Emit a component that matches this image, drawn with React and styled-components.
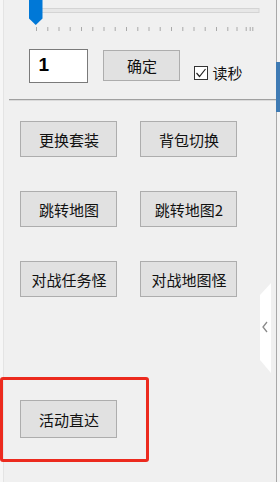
import styled, { createGlobalStyle } from 'styled-components'

// Estilos globais da página
const GlobalStyle = createGlobalStyle`
  html, body {
    margin: 0;
    padding: 0;
    overflow: hidden;
    background: #f0f0f0;
  }
  #root {
    width: 280px;
    height: 482px;
  }
`

const cjk = `"Noto Sans CJK SC", "Microsoft YaHei", sans-serif`

// Janela principal
const Window = styled.div`
  position: relative;
  width: 280px;
  height: 482px;
  display: flex;
  background: #f0f0f0;
  overflow: hidden;
`

const Gutter = styled.div`
  width: 4px;
  background: #f6f6f6;
  border-right: 1px solid #e4e4e4;
`

const Panel = styled.div`
  flex: 1;
  display: flex;
  flex-direction: column;
`

const RightEdge = styled.div`
  width: 3px;
  display: flex;
  flex-direction: column;
  background: #f4f4f4;
  border-left: 1px solid #a8a8a8;
`

const EdgeGap = styled.div`
  height: ${p => p.$h}px;
`

const EdgeBlue = styled.div`
  height: 50px;
  margin-left: -1px;
  background: #3f7bb4;
`

const SliderArt = styled.svg`
  display: block;
  width: 272px;
  height: 34px;
`

const ControlRow = styled.div`
  display: flex;
  align-items: flex-start;
  margin-top: 15px;
  padding-left: 25px;
  height: 34px;
`

const NumberBox = styled.div`
  box-sizing: border-box;
  width: 59px;
  height: 34px;
  background: #fff;
  border: 1px solid #7a7a7a;
  padding: 4px 0 0 8px;
  font-family: "Liberation Sans", Arial, sans-serif;
  font-weight: 700;
  font-size: 19px;
  color: #000;
`

const WinButton = styled.div`
  box-sizing: border-box;
  width: ${p => p.$w || 97}px;
  height: ${p => p.$h || 36}px;
  display: flex;
  align-items: center;
  justify-content: center;
  background: #e1e1e1;
  border: 1px solid #adadad;
  font-family: ${cjk};
  font-size: 15px;
  color: #111;
  margin-left: ${p => p.$ml || 0}px;
  margin-top: ${p => p.$mt || 0}px;
`

const CheckLabel = styled.label`
  display: flex;
  align-items: center;
  gap: 4px;
  margin-left: 14px;
  margin-top: 15px;
  font-family: ${cjk};
  font-size: 15px;
  line-height: 18px;
  color: #111;
`

const CheckBox = styled.span`
  box-sizing: border-box;
  width: 14px;
  height: 14px;
  border: 1px solid #333;
  background: #fff;
  display: flex;
  align-items: center;
  justify-content: center;
`

const Separator = styled.div`
  margin: 16px 0 0 5px;
  height: 1px;
  background: #a0a0a0;
  box-shadow: 0 1px 0 #dadada;
`

const ButtonGrid = styled.div`
  display: grid;
  grid-template-columns: 97px 97px;
  grid-auto-rows: 36px;
  column-gap: 23px;
  row-gap: 34px;
  padding: 21px 0 0 16px;
`

const BottomArea = styled.div`
  padding: 103px 0 0 16px;
`

// Aba de recolher à direita
const CollapseTab = styled.svg`
  position: absolute;
  left: 259px;
  top: 282px;
  width: 14px;
  height: 92px;
`

// Marcação vermelha
const Highlight = styled.div`
  position: absolute;
  left: 0;
  top: 377px;
  width: 149px;
  height: 85px;
  box-sizing: border-box;
  border: 3px solid #ec2a1e;
  border-radius: 3px;
`

const ticks = [32, 43.3, 54.5, 65.7, 77, 88.3, 99.5, 110.7, 122, 133.3, 144.5, 155.7, 167, 178.3, 189.5, 200.7, 212, 223.3, 232.5, 241.7, 245.7, 248.3]

const buttons = ['更换套装', '背包切换', '跳转地图', '跳转地图2', '对战任务怪', '对战地图怪']

const App = () => {
  return (
    <>
      <GlobalStyle />
      <Window>
        <Gutter />
        <Panel>
          <SliderArt viewBox="0 0 272 34">
            <rect x="32" y="8.5" width="223" height="4" fill="#e7e7e7" stroke="#d4d4d4" />
            {ticks.map(x => (
              <rect key={x} x={x} y="27" width="1" height="4" fill="#a9a9a9" />
            ))}
            <path d="M25 0 H38.5 V18.5 L31.75 25 L25 18.5 Z" fill="#0078d7" />
          </SliderArt>
          <ControlRow>
            <NumberBox>1</NumberBox>
            <WinButton $w={77} $h={31} $ml={15} $mt={1}>确定</WinButton>
            <CheckLabel>
              <CheckBox>
                <svg width="12" height="12" viewBox="0 0 12 12">
                  <path d="M1.5 6 L4.5 9.5 L10.5 2" fill="none" stroke="#222" strokeWidth="1.2" />
                </svg>
              </CheckBox>
              读秒
            </CheckLabel>
          </ControlRow>
          <Separator />
          <ButtonGrid>
            {buttons.map(b => (
              <WinButton key={b}>{b}</WinButton>
            ))}
          </ButtonGrid>
          <BottomArea>
            <WinButton $h={38}>活动直达</WinButton>
          </BottomArea>
        </Panel>
        <RightEdge>
          <EdgeGap $h={62} />
          <EdgeBlue />
        </RightEdge>
        <CollapseTab viewBox="0 0 14 92">
          <path d="M1 13 L12 1 V91 L1 78 Z" fill="#fff" />
          <path d="M8 40 L4 45 L8 50" fill="none" stroke="#8a8a8a" strokeWidth="1.3" />
        </CollapseTab>
        <Highlight />
      </Window>
    </>
  )
}

export default App
